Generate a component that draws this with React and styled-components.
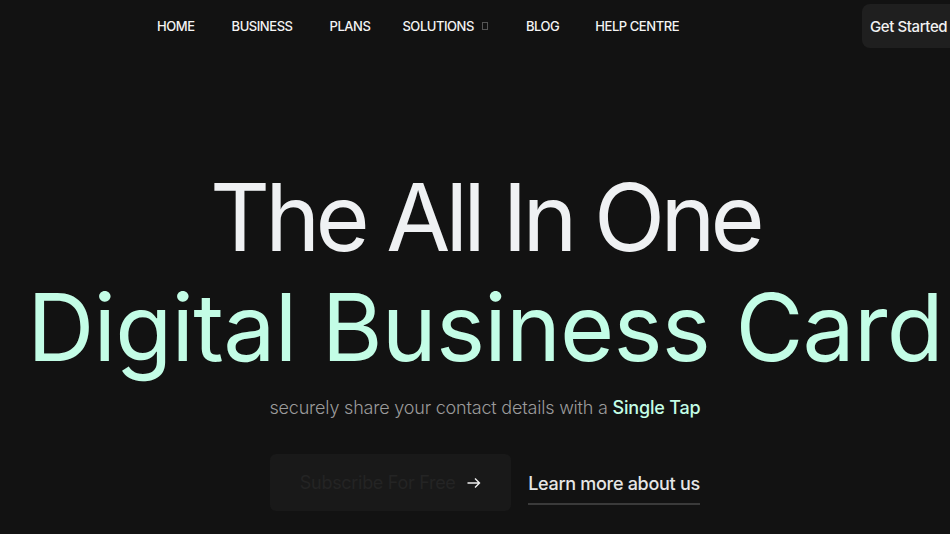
import React from 'react';
import styled, {createGlobalStyle} from 'styled-components';

const GlobalStyle = createGlobalStyle`
    html, body {
        margin: 0;
        padding: 0;
        background: #121212;
        overflow: hidden;
    }
    body {
        font-family: Inter, "Noto Sans", sans-serif;
    }
`

const NAV_ITEMS = [
    {label: 'HOME', gap: 37},
    {label: 'BUSINESS', gap: 37},
    {label: 'PLANS', gap: 32},
    {label: 'SOLUTIONS', gap: 38},
    {label: 'BLOG', gap: 36},
    {label: 'HELP CENTRE', gap: 0},
];

const App = () => {
    return (
        <Page>
            <GlobalStyle/>
            <Header>
                <NavList>
                    {NAV_ITEMS.map(item => (
                        <NavItem key={item.label} gap={item.gap}>
                            {item.label}
                            {item.label === 'SOLUTIONS' && <Caret/>}
                        </NavItem>
                    ))}
                </NavList>
                <StartButton>Get Started</StartButton>
            </Header>
            <Hero>
                <Title spacing={-4.8}>The All In One</Title>
                <Title accent spacing={-0.8}>Digital Business Card</Title>
                <Sub>securely share your contact details with a <b>Single Tap</b></Sub>
                <Actions>
                    <Subscribe>
                        Subscribe For Free
                        <Arrow viewBox="0 0 16 16">
                            <path d="M1.5 8h12M9 3.5L13.5 8 9 12.5" fill="none" stroke="#eeeeee" strokeWidth="1.4"/>
                        </Arrow>
                    </Subscribe>
                    <LearnMore>Learn more about us</LearnMore>
                </Actions>
            </Hero>
        </Page>
    );
};

export default App;

const Page = styled.div`
    width: 950px;
    height: 534px;
    background: #121212;
    overflow: hidden;
`

const Header = styled.header`
    height: 52px;
    display: flex;
    align-items: center;
    padding-left: 157px;
    position: relative;
`

const NavList = styled.ul`
    margin: 0;
    padding: 0;
    list-style: none;
    display: flex;
    align-items: center;
`

const NavItem = styled.li`
    font-family: Inter, sans-serif;
    font-size: 13px;
    font-weight: 500;
    letter-spacing: -0.45px;
    color: #f4f4f4;
    margin-right: ${props => props.gap}px;
    display: flex;
    align-items: center;
`

const Caret = styled.span`
    display: inline-block;
    width: 4px;
    height: 6px;
    margin-left: 8px;
    border: 1px solid #555;
`

const StartButton = styled.button`
    position: absolute;
    left: 862px;
    top: 4px;
    width: 110px;
    height: 44px;
    border: 0;
    border-radius: 8px;
    background: #1f1f1f;
    color: #f2f2f2;
    font-family: Inter, sans-serif;
    font-size: 15px;
    font-weight: 500;
    letter-spacing: -0.4px;
    text-align: left;
    padding: 0 0 0 8px;
`

const Hero = styled.section`
    display: flex;
    flex-direction: column;
    align-items: center;
    padding: 110px 0 0 20px;
`

const Title = styled.h1`
    margin: 0;
    font-family: Inter, sans-serif;
    font-size: 93px;
    font-weight: 400;
    line-height: 110px;
    letter-spacing: ${props => props.spacing}px;
    white-space: nowrap;
    color: ${props => props.accent ? '#c3fde6' : '#eff1f3'};
`

const Sub = styled.p`
    margin: 15px 0 0;
    font-family: Inter, sans-serif;
    font-size: 18px;
    font-weight: 300;
    color: #9b9b9b;
    letter-spacing: -0.2px;
    b {
        font-weight: 500;
        color: #c3fde6;
    }
`

const Actions = styled.div`
    margin-top: 36px;
    display: flex;
    align-items: center;
    gap: 17px;
`

const Subscribe = styled.button`
    width: 241px;
    height: 57px;
    border: 0;
    border-radius: 6px;
    background: #191919;
    color: #242424;
    font-family: Inter, sans-serif;
    font-size: 18px;
    font-weight: 400;
    letter-spacing: -0.3px;
    display: flex;
    align-items: center;
    justify-content: center;
    gap: 10px;
`

const Arrow = styled.svg`
    width: 16px;
    height: 16px;
`

const LearnMore = styled.a`
    font-family: Inter, sans-serif;
    font-size: 18px;
    font-weight: 500;
    letter-spacing: -0.3px;
    color: #e6e6e6;
    padding: 6px 0 9px;
    border-bottom: 2px solid #3a3a3a;
    margin-top: 6px;
`
